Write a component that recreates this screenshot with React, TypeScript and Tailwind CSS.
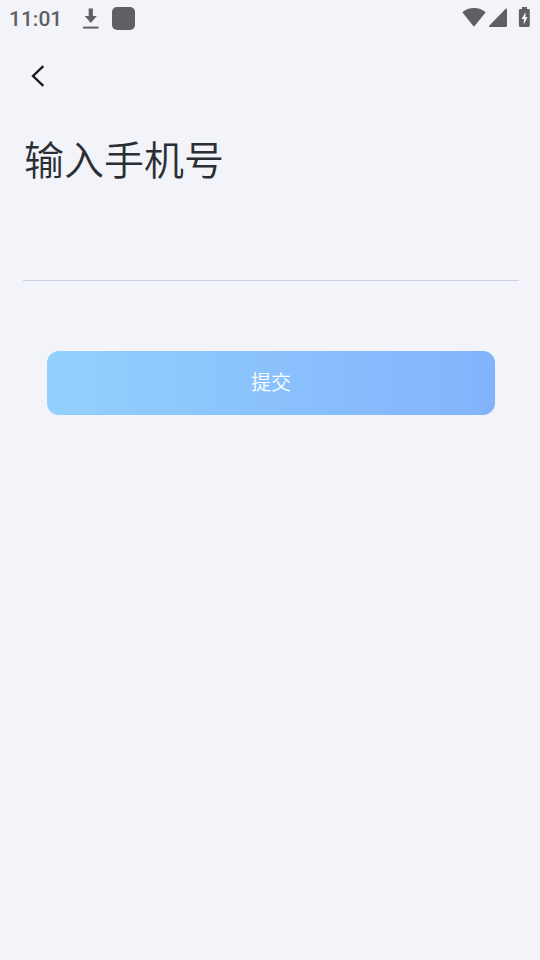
import React from 'react';

const StatusBar: React.FC = () => {
  return (
    <div className="flex h-9 items-center justify-between pl-[9px] pr-[10px] text-[#5f6064]">
      <div className="flex items-center">
        <span className="pt-0.5 font-[Roboto,sans-serif] text-[21px] leading-6 font-medium">11:01</span>

        {/* Download */}
        <svg className="ml-5" width="17" height="22" viewBox="0 0 17 22" fill="currentColor" aria-hidden="true">
          <path d="M6.700 1.500h4.200v7.600h3.900L8.800 16 2.700 9.100h4z" />
          <path d="M1 19.600h15.500v2H1z" />
        </svg>

        <span className="ml-[13px] size-[23px] rounded-[5px] bg-[#5f6064]" />
      </div>

      <div className="flex items-center gap-[3px] pb-0.5">
        {/* Wifi */}
        <svg width="24" height="20" viewBox="0 0 24 20" fill="currentColor" aria-hidden="true">
          <path d="M12 1C7.600 1 3.500 2.500.3 5.200l11 13.800c.4.5 1 .5 1.400 0l11-13.800C20.500 2.500 16.400 1 12 1z" />
        </svg>

        {/* Signal */}
        <svg width="18" height="20" viewBox="0 0 18 20" fill="currentColor" aria-hidden="true">
          <path d="M18 2.300V19a1 1 0 0 1-1 1H.8c-.8 0-1.100-.7-.6-1.200L16.700 1.800c.5-.5 1.300-.3 1.300.5z" />
        </svg>

        {/* Battery */}
        <svg className="ml-2" width="12" height="20" viewBox="0 0 12 20" fill="currentColor" aria-hidden="true">
          <path
            fillRule="evenodd"
            d="M4 0h5v2h1.500c.8 0 1.300.6 1.300 1.400v15.200c0 .8-.5 1.400-1.300 1.400H2.200C1.400 20 .9 19.400.9 18.600V3.400C.9 2.600 1.400 2 2.200 2H4zM7.600 5 3.500 12h2.300v5.500L9.500 10H7.400z"
          />
        </svg>
      </div>
    </div>
  );
};

const App: React.FC = () => {
  return (
    <div className="min-h-screen bg-[#f2f4fa] font-['Noto_Sans_CJK_SC',sans-serif]">
      <StatusBar />

      <header className="flex h-20 items-center px-6">
        <button type="button" aria-label="返回" className="flex h-10 w-7 items-center justify-center text-[#15171b]">
          <svg width="24" height="24" viewBox="0 0 24 24" fill="none" stroke="currentColor" strokeWidth="2.300">
            <polyline points="17.300,2.200 7,12 17.300,21.800" />
          </svg>
        </button>
      </header>

      <main>
        <form className="pr-[21px] pl-[23px]" onSubmit={(e) => e.preventDefault()}>
          <label htmlFor="phone" className="block pt-3.5 pl-px text-[40px] leading-14 font-[350] text-[#2b2e33]">
            输入手机号
          </label>
          <input
            id="phone"
            type="tel"
            className="mt-9 block h-[59px] w-full border-b border-[#cdd0e2] bg-transparent text-2xl text-[#2b2e33] outline-none"
          />

          <div className="px-6 pt-[70px]">
            <button
              type="submit"
              className="h-16 w-full rounded-xl bg-linear-to-r from-[#93d0fd] to-[#82b3fc] pb-0.5 text-xl font-[350] text-white"
            >
              提交
            </button>
          </div>
        </form>
      </main>
    </div>
  );
};

export default App;
